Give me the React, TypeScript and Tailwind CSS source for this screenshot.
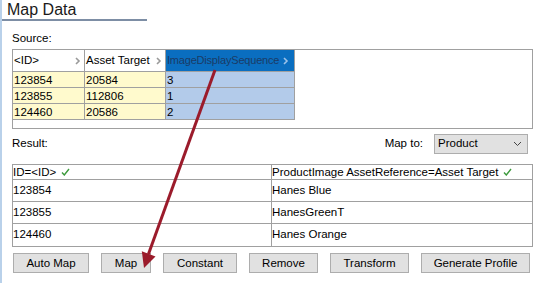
import React from "react";

const font = {
  fontFamily: 'Tahoma, "Liberation Sans", sans-serif',
};

function Chevron({ light }: { light?: boolean }) {
  return (
    <svg width="6" height="8" viewBox="0 0 6 8" className="shrink-0">
      <path
        d="M1 1 L4 4 L1 7"
        fill="none"
        stroke={light ? "#9cc2e8" : "#9a9a9a"}
        strokeWidth="1.6"
      />
    </svg>
  );
}

function Check() {
  return (
    <svg width="9" height="8" viewBox="0 0 9 8" className="inline-block ml-[5px]">
      <path d="M1 4.5 L3.3 7 L8 1" fill="none" stroke="#3c9a3c" strokeWidth="1.4" />
    </svg>
  );
}

export default function App() {
  const source = [
    ["123854", "20584", "3"],
    ["123855", "112806", "1"],
    ["124460", "20586", "2"],
  ];
  const result = [
    ["123854", "Hanes Blue"],
    ["123855", "HanesGreenT"],
    ["124460", "Hanes Orange"],
  ];
  const buttons = [
    { label: "Auto Map", w: "w-[76px]" },
    { label: "Map", w: "w-[50px]" },
    { label: "Constant", w: "w-[74px]" },
    { label: "Remove", w: "w-[69px]" },
    { label: "Transform", w: "w-[79px]" },
    { label: "Generate Profile", w: "w-[109px]" },
  ];

  return (
    <div className="relative w-[541px] h-[289px] bg-white overflow-hidden text-[11.5px] text-black" style={font}>
      <div className="h-[283px] border-l-2 border-[#b9d1ea]">
        {/* Title */}
        <div className="pl-[5px] h-[19px] text-[16px] leading-[19px] text-[#1a1a1a]">Map Data</div>
        <div className="w-[145px] h-[2px] bg-[#7d8ea5]" />

        <div className="pl-[10px]">
          <div className="mt-[10px] h-[14px] leading-[14px]">Source:</div>

          {/* Source box */}
          <div className="mt-[4px] w-[521px] h-[80px] border border-[#a0a0a0] bg-white">
            <div className="flex h-[22px]">
              <div className="w-[72px] flex items-center justify-between pl-[1px] pr-[3px] border-r border-b border-[#a0a0a0] bg-white">
                <span>&lt;ID&gt;</span>
                <Chevron />
              </div>
              <div className="w-[81px] flex items-center justify-between pl-[1px] pr-[3px] border-r border-b border-[#a0a0a0] bg-white">
                <span>Asset Target</span>
                <Chevron />
              </div>
              <div className="w-[129px] flex items-center justify-between pl-[1px] pr-[5px] border-r border-b border-[#a0a0a0] bg-[#0a6ec0] text-[#1b3b66]">
                <span className="text-[11px] tracking-[-0.2px]">ImageDisplaySequence</span>
                <Chevron light />
              </div>
            </div>
            {source.map((r) => (
              <div key={r[0]} className="flex h-[16px] leading-[16px]">
                <div className="w-[72px] pl-[1px] border-r border-b border-[#a0a0a0] bg-[#fffacd]">{r[0]}</div>
                <div className="w-[81px] pl-[1px] border-r border-b border-[#a0a0a0] bg-[#fffacd]">{r[1]}</div>
                <div className="w-[129px] pl-[1px] border-r border-b border-[#a0a0a0] bg-[#b3cbea]">{r[2]}</div>
              </div>
            ))}
          </div>

          {/* Result / Map to */}
          <div className="mt-[5px] w-[521px] h-[20px] flex items-center">
            <span className="flex-1">Result:</span>
            <span className="mr-[11px]">Map to:</span>
            <div className="w-[94px] h-[20px] mr-[5px] flex items-center justify-between pl-[3px] pr-[5px] bg-[#e1e1e1] border border-[#adadad]">
              <span>Product</span>
              <svg width="9" height="6" viewBox="0 0 9 6">
                <path d="M1 1 L4.5 4.5 L8 1" fill="none" stroke="#444" strokeWidth="1" />
              </svg>
            </div>
          </div>

          {/* Result table */}
          <div className="mt-[10px] w-[521px] border border-[#a0a0a0]">
            <div className="flex h-[15px] leading-[14px] border-b border-[#a0a0a0]">
              <div className="w-[259px] border-r border-[#a0a0a0] flex items-center">
                ID=&lt;ID&gt;
                <Check />
              </div>
              <div className="flex-1 flex items-center">
                ProductImage AssetReference=Asset Target
                <Check />
              </div>
            </div>
            {result.map((r, i) => (
              <div
                key={r[0]}
                className={`flex h-[22px] items-center ${i < result.length - 1 ? "border-b border-[#a0a0a0]" : ""}`}
              >
                <div className="w-[259px] h-full flex items-center border-r border-[#a0a0a0]">{r[0]}</div>
                <div className="flex-1">{r[1]}</div>
              </div>
            ))}
          </div>

          {/* Buttons */}
          <div className="mt-[6px] flex gap-[12px] pl-[1px]">
            {buttons.map((b) => (
              <button
                key={b.label}
                className={`${b.w} h-[20px] bg-[#e1e1e1] border border-[#adadad] text-[11.5px] leading-[18px] text-black`}
              >
                {b.label}
              </button>
            ))}
          </div>
        </div>
      </div>

      {/* Mapping arrow drawn over the tables */}
      <svg className="absolute left-0 top-0 pointer-events-none" width="541" height="289">
        <line x1="215" y1="70" x2="148.5" y2="254" stroke="#9b1b2b" strokeWidth="3" />
        <polygon points="144,268 155.5,256.5 141.8,251.2" fill="#9b1b2b" />
      </svg>
    </div>
  );
}
